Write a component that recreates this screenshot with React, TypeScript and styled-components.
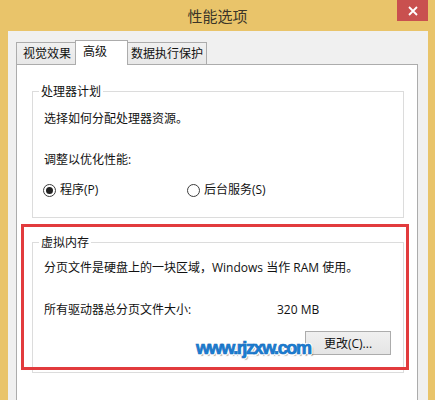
import React from "react";
import styled, { createGlobalStyle } from "styled-components";

const Global = createGlobalStyle`
  html, body { margin: 0; padding: 0; }
  body { font-family: "Open Sans", "Noto Sans CJK SC", sans-serif; }
`;

const Window = styled.div`
  position: relative;
  width: 435px;
  height: 400px;
  background: #e9c46a;
  display: flex;
  flex-direction: column;
  overflow: hidden;
`;

const TitleBar = styled.div`
  height: 31px;
  flex: none;
  display: grid;
  grid-template-columns: 1fr auto 1fr;
  align-items: start;
`;

const Title = styled.div`
  grid-column: 2;
  padding-top: 6px;
  font-family: "Noto Sans CJK SC", sans-serif;
  font-size: 15px;
  line-height: 20px;
  color: #3b3528;
`;

const CloseButton = styled.div`
  grid-column: 3;
  justify-self: end;
  margin-right: 7px;
  width: 31px;
  height: 21px;
  background: #c9504f;
  display: flex;
  align-items: center;
  justify-content: center;
`;

const Client = styled.div`
  flex: 1;
  margin: 0 7px 0 8px;
  background: #f0f0f0;
  padding: 9px 10px 0 8px;
  display: flex;
  flex-direction: column;
`;

const TabStrip = styled.div`
  height: 24px;
  flex: none;
  display: flex;
  align-items: flex-end;
  position: relative;
  z-index: 1;
`;

const Tab = styled.div<{ $w: number; $pl: number; $active?: boolean }>`
  box-sizing: border-box;
  width: ${(p) => p.$w}px;
  height: ${(p) => (p.$active ? 25 : 22)}px;
  margin-bottom: ${(p) => (p.$active ? -1 : 0)}px;
  padding-left: ${(p) => p.$pl}px;
  padding-top: 2px;
  border: 1px solid #acacac;
  border-bottom: none;
  margin-left: ${(p) => (p.$active ? -1 : 0)}px;
  margin-right: ${(p) => (p.$active ? -1 : 0)}px;
  background: ${(p) => (p.$active ? "#ffffff" : "linear-gradient(#f0f0f0, #e8e8e8)")};
  font-family: "Noto Sans CJK SC", sans-serif;
  font-size: 12px;
  line-height: 16px;
  color: #111;
  white-space: nowrap;
`;

const Panel = styled.div`
  flex: 1;
  background: #ffffff;
  border: 1px solid #acacac;
  border-bottom: none;
  padding: 18px 13px 0 15px;
  display: flex;
  flex-direction: column;
  gap: 16px;
`;

const Group = styled.fieldset`
  margin: 0;
  padding: 0;
  border: 1px solid #dcdcdc;
  min-width: 0;
`;

const Legend = styled.legend`
  margin-left: 6px;
  padding: 0 2px;
  font-family: "Noto Sans CJK SC", sans-serif;
  font-size: 12px;
  line-height: 16px;
  color: #111;
`;

const GroupBody = styled.div<{ $pt: number; $pb: number }>`
  padding: ${(p) => p.$pt}px 12px ${(p) => p.$pb}px 11px;
  display: flex;
  flex-direction: column;
`;

const Line = styled.div<{ $mt?: number }>`
  margin-top: ${(p) => p.$mt ?? 0}px;
  font-size: 12px;
  line-height: 16px;
  color: #111;
  white-space: nowrap;
`;

const RadioRow = styled.div<{ $mt: number }>`
  margin-top: ${(p) => p.$mt}px;
  display: grid;
  grid-template-columns: 144px auto;
  margin-left: -1px;
`;

const RadioItem = styled.label`
  display: flex;
  align-items: center;
  gap: 4px;
  font-size: 12px;
  line-height: 16px;
  color: #111;
`;

const RadioCircle = styled.span<{ $checked?: boolean }>`
  box-sizing: border-box;
  width: 13px;
  height: 13px;
  border-radius: 50%;
  border: 1px solid #3c3c3c;
  background: #fff;
  display: flex;
  align-items: center;
  justify-content: center;
  &::after {
    content: "";
    width: 7px;
    height: 7px;
    border-radius: 50%;
    background: ${(p) => (p.$checked ? "#222" : "transparent")};
  }
`;

const ValueRow = styled.div<{ $mt: number }>`
  margin-top: ${(p) => p.$mt}px;
  display: grid;
  grid-template-columns: 233px auto;
  font-size: 12px;
  line-height: 16px;
  color: #111;
`;

const ButtonRow = styled.div<{ $mt: number }>`
  margin-top: ${(p) => p.$mt}px;
  display: flex;
  justify-content: flex-end;
`;

const Button = styled.div`
  box-sizing: border-box;
  width: 86px;
  height: 24px;
  border: 1px solid #acacac;
  background: linear-gradient(#f0f0f0, #e5e5e5);
  display: flex;
  align-items: center;
  justify-content: center;
  font-size: 12px;
  color: #111;
`;

const Highlight = styled.div`
  position: absolute;
  left: 21px;
  top: 224px;
  width: 388px;
  height: 146px;
  box-sizing: border-box;
  border: 3px solid #e23b3d;
  pointer-events: none;
`;

const Watermark = styled.div`
  position: absolute;
  left: 196px;
  top: 338px;
  font-family: "Liberation Sans", Arial, sans-serif;
  font-weight: 700;
  font-size: 18px;
  letter-spacing: -1.4px;
  line-height: 20px;
  color: #1a7fd4;
  -webkit-text-stroke: 0.7px #1a6fc0;
  text-shadow: 1.5px 0 0 #fff, -1.5px 0 0 #fff, 0 1.5px 0 #fff, 0 -1.5px 0 #fff,
    1px 1px 0 #fff, -1px -1px 0 #fff, 1px -1px 0 #fff, -1px 1px 0 #fff,
    2px 2px 1px rgba(0, 0, 0, 0.3);
`;

export default function App() {
  return (
    <>
      <Global />
      <Window>
        <TitleBar>
          <Title>性能选项</Title>
          <CloseButton>
            <svg width="10" height="10" viewBox="0 0 10 10">
              <path d="M1 1 L9 9 M9 1 L1 9" stroke="#fff" strokeWidth="1.8" />
            </svg>
          </CloseButton>
        </TitleBar>
        <Client>
          <TabStrip>
            <Tab $w={60} $pl={6}>视觉效果</Tab>
            <Tab $w={53} $pl={7} $active>
              高级
            </Tab>
            <Tab $w={80} $pl={3}>数据执行保护</Tab>
          </TabStrip>
          <Panel>
            <Group>
              <Legend>处理器计划</Legend>
              <GroupBody $pt={12} $pb={19}>
                <Line>选择如何分配处理器资源。</Line>
                <Line $mt={25}>调整以优化性能:</Line>
                <RadioRow $mt={14}>
                  <RadioItem>
                    <RadioCircle $checked />
                    程序(P)
                  </RadioItem>
                  <RadioItem>
                    <RadioCircle />
                    后台服务(S)
                  </RadioItem>
                </RadioRow>
              </GroupBody>
            </Group>
            <Group>
              <Legend>虚拟内存</Legend>
              <GroupBody $pt={10} $pb={17}>
                <Line>分页文件是硬盘上的一块区域，Windows 当作 RAM 使用。</Line>
                <ValueRow $mt={26}>
                  <span>所有驱动器总分页文件大小:</span>
                  <span>320 MB</span>
                </ValueRow>
                <ButtonRow $mt={13}>
                  <Button>更改(C)...</Button>
                </ButtonRow>
              </GroupBody>
            </Group>
          </Panel>
        </Client>
        <Highlight />
        <Watermark>www.rjzxw.com</Watermark>
      </Window>
    </>
  );
}
